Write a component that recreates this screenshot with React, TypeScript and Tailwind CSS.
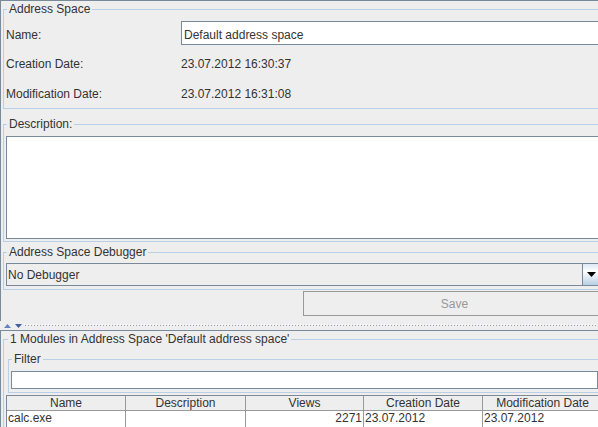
import React from "react";

function Legend({ children, leftPad = "ml-[3px]" }: { children: React.ReactNode; leftPad?: string }) {
  return <legend className={`${leftPad} px-[2px] leading-[15px] text-[#333333]`}>{children}</legend>;
}

export default function App() {
  return (
    <div className="w-[598px] h-[427px] overflow-hidden bg-[#eeeeee] flex flex-col text-[12px] leading-[14px] text-[#333333] font-['Liberation_Sans',Arial,sans-serif]">
      {/* Top pane */}
      <div className="h-[321px] shrink-0 border-t border-l border-[#7a8a99] overflow-hidden">
        <div className="w-[606px] pt-[1px]">
          <fieldset className="min-w-0 ml-[2px] mr-[3px] border border-[#b8cfe5]">
            <Legend>Address Space</Legend>
            <div className="pl-[2px] pr-[2px] pb-[7px]">
              <div className="flex mt-[4px]">
                <div className="w-[175px] shrink-0 pt-[7px]">Name:</div>
                <div className="flex-1 h-[24px] border border-[#7a8a99] bg-white pl-[2px] pt-[6px] text-[#333333]">
                  Default address space
                </div>
              </div>
              <div className="flex mt-[12px]">
                <div className="w-[175px] shrink-0">Creation Date:</div>
                <div>23.07.2012 16:30:37</div>
              </div>
              <div className="flex mt-[16px]">
                <div className="w-[175px] shrink-0">Modification Date:</div>
                <div>23.07.2012 16:31:08</div>
              </div>
            </div>
          </fieldset>

          <fieldset className="min-w-0 ml-[2px] mr-[3px] mt-[8px] border border-[#b8cfe5]">
            <Legend>Description:</Legend>
            <div className="pl-[2px] pr-[2px] pb-[2px]">
              <div className="mt-[4px] h-[103px] border border-[#7a8a99] bg-white" />
            </div>
          </fieldset>

          <fieldset className="min-w-0 ml-[2px] mr-[3px] mt-[3px] border border-[#b8cfe5]">
            <Legend>Address Space Debugger</Legend>
            <div className="pl-[2px] pr-[2px] pb-[3px]">
              <div className="mt-[3px] h-[23px] flex border border-[#7a8a99] bg-[#eeeeee]">
                <div className="flex-1 pl-[1px] flex items-center">No Debugger</div>
                <div className="w-[18px] shrink-0 border-l border-[#7a8a99] bg-[linear-gradient(#dde8f3,#ffffff_35%,#b8cfe5)] flex items-center pl-[4px]">
                  <svg width="9" height="5" viewBox="0 0 9 5">
                    <polygon points="0,0 9,0 4.5,5" fill="#000000" />
                  </svg>
                </div>
              </div>
            </div>
          </fieldset>

          <div className="flex justify-end mr-[1px] mt-[1px]">
            <div className="w-[303px] h-[25px] border border-[#999999] bg-[#eeeeee] flex items-center justify-center text-[#999999]">
              Save
            </div>
          </div>
        </div>
      </div>

      {/* Splitter */}
      <div className="h-[9px] shrink-0 flex items-center relative">
        <div className="absolute left-[24px] right-0 top-[3px] h-[1px] bg-[linear-gradient(90deg,#ffffff_1px,transparent_1px)] bg-[length:3px_1px]" />
        <div className="absolute left-[25px] right-0 top-[4px] h-[1px] bg-[linear-gradient(90deg,#9aa4b0_1px,transparent_1px)] bg-[length:3px_1px]" />
        <div className="flex items-center gap-[4px] pl-[4px] mt-[1px]">
          <svg width="7" height="4" viewBox="0 0 7 4">
            <polygon points="0,4 7,4 3.5,0" fill="#6382bf" />
          </svg>
          <svg width="7" height="4" viewBox="0 0 7 4">
            <polygon points="0,0 7,0 3.5,4" fill="#40609f" />
          </svg>
        </div>
      </div>

      {/* Bottom pane */}
      <div className="flex-1 border-t border-l border-[#7a8a99] overflow-hidden">
        <div className="w-[602px] pt-[1px]">
          <fieldset className="min-w-0 ml-[2px] mr-[1px] border border-[#b8cfe5]">
            <Legend leftPad="ml-[4px]">1 Modules in Address Space 'Default address space'</Legend>
            <div>
              <fieldset className="min-w-0 ml-[4px] mt-[5px] border border-[#b8cfe5]">
                <Legend>Filter</Legend>
                <div className="pl-[2px] pr-[2px] pb-[3px]">
                  <div className="mt-[4px] h-[18px] border border-[#7a8a99] bg-white" />
                </div>
              </fieldset>

              <div className="ml-[2px] mt-[2px] border-t border-l border-[#7a8a99]">
                <div className="flex h-[15px] bg-[#eeeeee] border-b border-[#999999]">
                  <div className="w-[119px] shrink-0 border-r border-[#999999] text-center">Name</div>
                  <div className="w-[120px] shrink-0 border-r border-[#999999] text-center">Description</div>
                  <div className="w-[118px] shrink-0 border-r border-[#999999] text-center">Views</div>
                  <div className="w-[119px] shrink-0 border-r border-[#999999] text-center">Creation Date</div>
                  <div className="w-[120px] shrink-0 border-r border-[#999999] text-center">Modification Date</div>
                </div>
                <div className="flex h-[17px] bg-white">
                  <div className="w-[119px] shrink-0 border-r border-b border-[#999999] pl-[1px]">calc.exe</div>
                  <div className="w-[120px] shrink-0 border-r border-b border-[#999999]" />
                  <div className="w-[118px] shrink-0 border-r border-b border-[#999999] text-right pr-[1px]">2271</div>
                  <div className="w-[119px] shrink-0 border-r border-b border-[#999999] pl-[1px]">23.07.2012</div>
                  <div className="w-[120px] shrink-0 border-r border-b border-[#999999] pl-[1px]">23.07.2012</div>
                </div>
              </div>
            </div>
          </fieldset>
        </div>
      </div>
    </div>
  );
}
